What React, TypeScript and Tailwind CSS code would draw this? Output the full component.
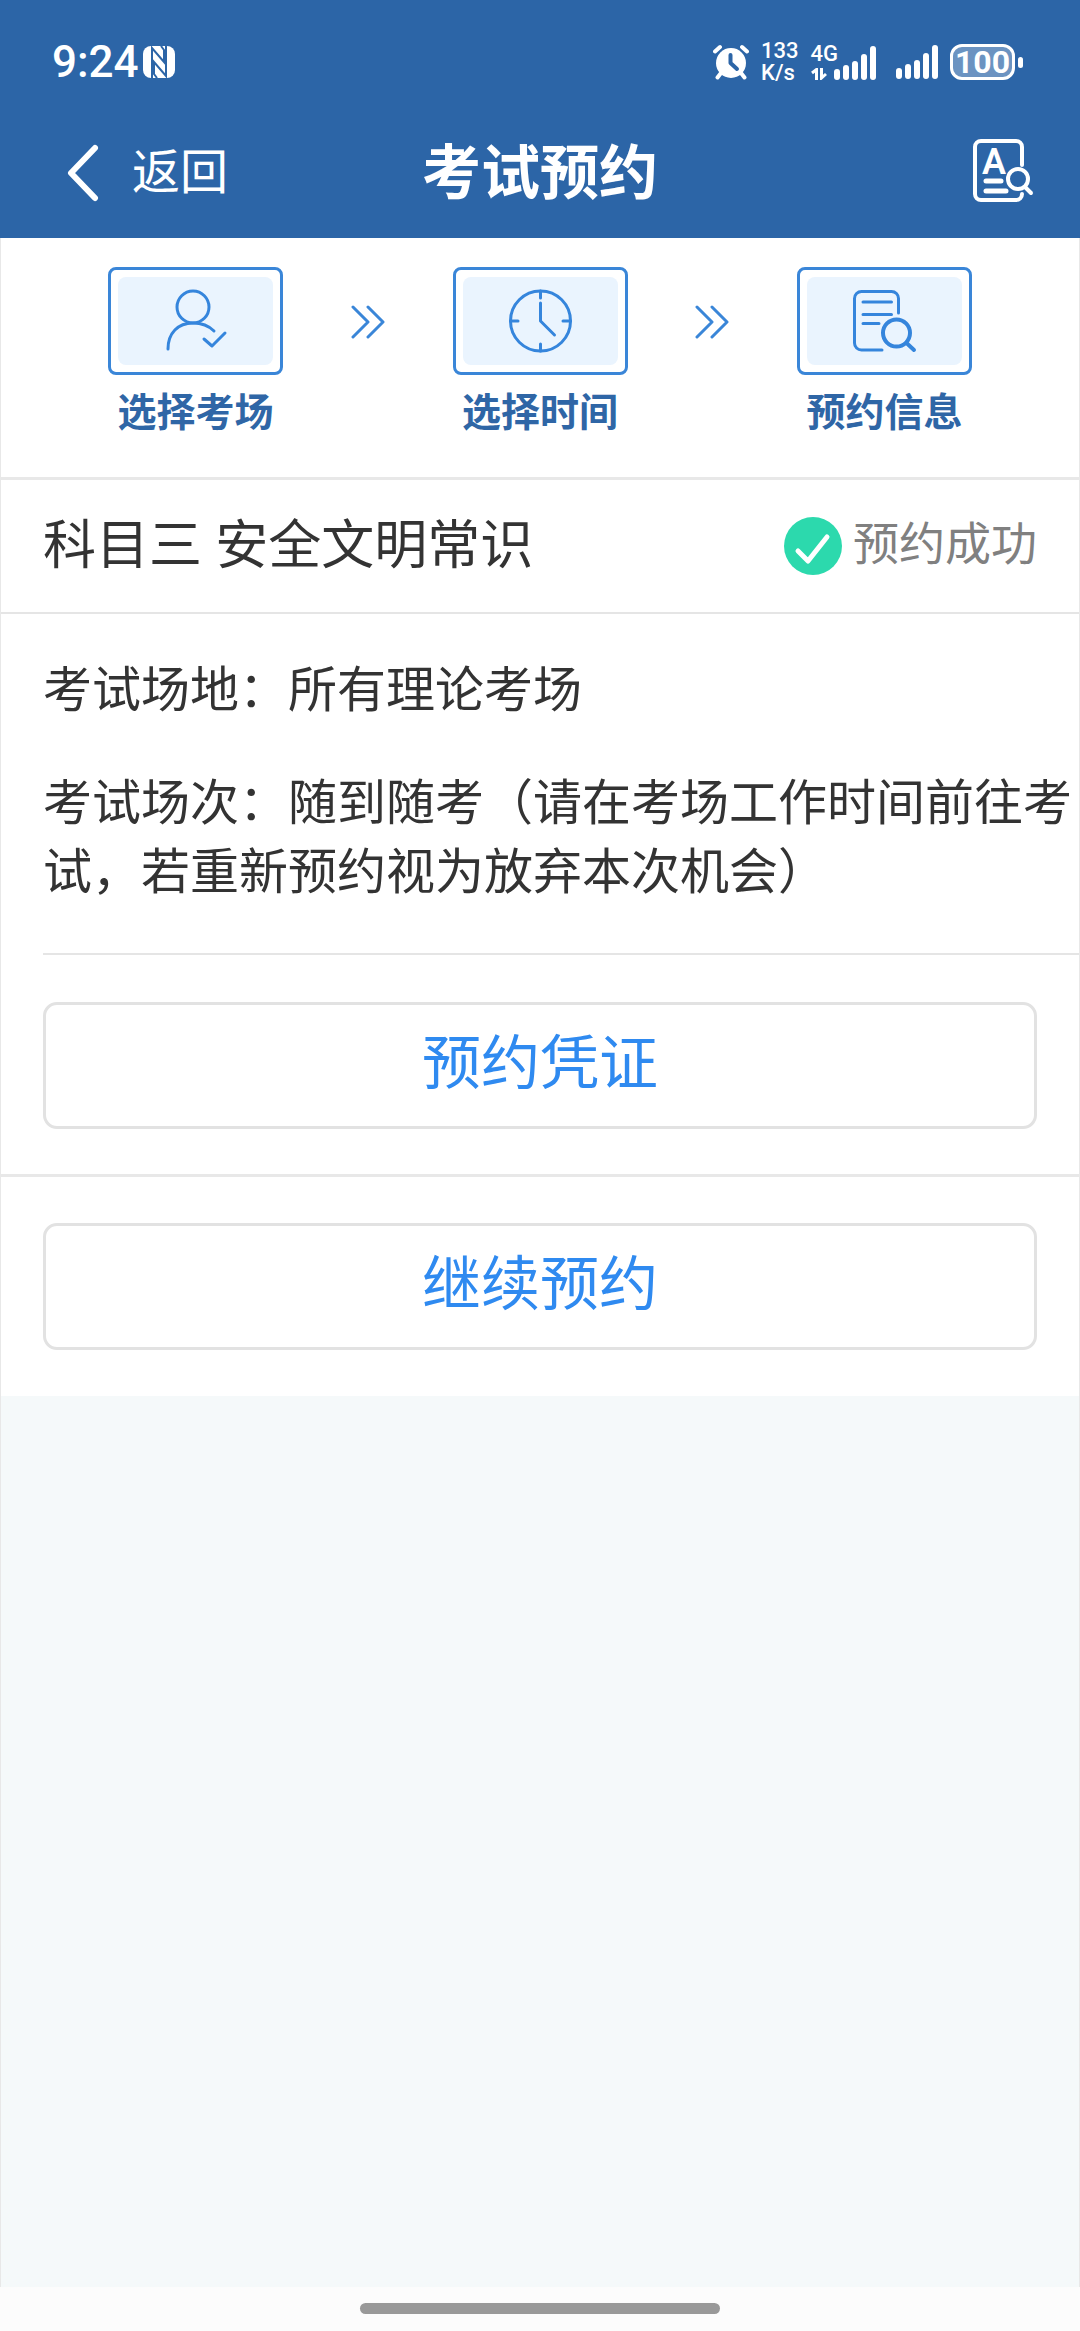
import type { ReactNode } from 'react';

interface StepProps {
  label: string;
  children: ReactNode;
}

function SignalBars() {
  return (
    <svg width="42" height="34" viewBox="0 0 42 34" fill="currentColor">
      <rect x="0" y="23" width="6" height="11" rx="3" />
      <rect x="9" y="19" width="6" height="15" rx="3" />
      <rect x="18" y="15" width="6" height="19" rx="3" />
      <rect x="27" y="8" width="6" height="26" rx="3" />
      <rect x="36" y="0" width="6" height="34" rx="3" />
    </svg>
  );
}

function StatusBar() {
  return (
    <div className="flex h-[108px] items-center justify-between pt-4 pr-[57px] pl-[52px]">
      <div className="flex items-center gap-1">
        <span className="text-[44px] leading-none font-medium">9:24</span>
        {/* NFC */}
        <svg width="32" height="32" viewBox="0 0 32 32">
          <rect width="32" height="32" rx="8" fill="currentColor" />
          <path d="M9 32V2L21 16V4L18 0M23 0V30L11 16V28L14 32" fill="none" stroke="#2c65a7" strokeWidth="2" />
        </svg>
      </div>

      <div className="flex items-center">
        {/* Alarm */}
        <svg width="36" height="36" viewBox="0 0 36 36">
          <circle cx="18" cy="19" r="15" fill="currentColor" />
          <path d="M2 7.500L7 3M34 7.500L29 3M8 29L4.500 33.500M28 29L31.500 33.500" stroke="currentColor" strokeWidth="4" strokeLinecap="round" />
          <path d="M17.500 11V19L24 25" fill="none" stroke="#2c65a7" strokeWidth="4" strokeLinecap="round" strokeLinejoin="round" />
        </svg>
        <div className="ml-3 flex flex-col text-[22px] leading-[22px] font-medium">
          <span>133</span>
          <span>K/s</span>
        </div>
        <div className="ml-3 flex items-end">
          <div className="-mr-1 flex flex-col gap-1">
            <span className="text-[22px] leading-5 font-medium">4G</span>
            <svg width="16" height="12" viewBox="0 0 16 12" fill="none" stroke="currentColor" strokeWidth="3">
              <path d="M1 5L5.500 1.500V12M10.500 0V10L15 6" />
            </svg>
          </div>
          <SignalBars />
        </div>
        <div className="ml-5">
          <SignalBars />
        </div>
        <div className="ml-3 flex h-9 w-[65px] items-center justify-center rounded-xl border-3 border-white bg-white/30 text-[32px] leading-none font-bold">
          100
        </div>
        <span className="ml-[3px] h-[11px] w-[5px] rounded-full bg-white" />
      </div>
    </div>
  );
}

function NavBar() {
  return (
    <nav className="grid h-[130px] grid-cols-3 items-center px-[46px]">
      <button type="button" className="flex items-center gap-8 justify-self-start pl-5 text-5xl leading-none">
        <svg width="34" height="58" viewBox="0 0 34 58" fill="none" stroke="currentColor" strokeWidth="6" strokeLinecap="round" strokeLinejoin="round">
          <path d="M29 4L5 29L29 54" />
        </svg>
        返回
      </button>
      <h1 className="text-center text-[59px] leading-none font-bold whitespace-nowrap">考试预约</h1>
      <button type="button" aria-label="考试说明" className="justify-self-end pb-1">
        <svg width="62" height="64" viewBox="0 0 62 64" fill="none" stroke="currentColor" strokeWidth="4" strokeLinecap="round" strokeLinejoin="round">
          <path d="M50 26V8a6 6 0 0 0-6-6H9a6 6 0 0 0-6 6V55a6 6 0 0 0 6 6H44a6 6 0 0 0 6-6" />
          <text x="22" y="35" textAnchor="middle" fontSize="36" fontWeight="600" fill="currentColor" stroke="none">A</text>
          <path d="M14 42H29M14 52H34" strokeWidth="5" />
          <circle cx="46" cy="40" r="10" />
          <path d="M53 48L59 54" />
        </svg>
      </button>
    </nav>
  );
}

function Step({ label, children }: StepProps) {
  return (
    <div className="flex flex-col items-center gap-1">
      <div className="rounded-lg border-3 border-[#3a86d8] p-[7px]">
        <svg width="155" height="88" viewBox="0 0 155 88" className="rounded-lg bg-[#eaf4fe]" fill="none" stroke="#3585dc" strokeWidth="3" strokeLinecap="round" strokeLinejoin="round">
          {children}
        </svg>
      </div>
      <span className="text-[39px] leading-[68px] font-bold text-[#2f66a6]">{label}</span>
    </div>
  );
}

function StepArrow() {
  return (
    <svg width="34" height="34" viewBox="0 0 34 34" className="mt-[38px]" fill="none" stroke="#3a86d8" strokeWidth="3" strokeLinecap="round" strokeLinejoin="round">
      <path d="M2 2L17 17L2 32M17 2L32 17L17 32" />
    </svg>
  );
}

function ActionButton({ label }: { label: string }) {
  return (
    <button type="button" className="h-[127px] w-full rounded-[14px] border-3 border-[#e2e2e2] bg-white pb-1 text-[59px] leading-none text-[#2f8af0]">
      {label}
    </button>
  );
}

export default function App() {
  const details = [
    '考试场地：所有理论考场',
    '考试场次：随到随考（请在考场工作时间前往考试，若重新预约视为放弃本次机会）'
  ];

  return (
    <div className="flex min-h-screen flex-col bg-[#f5f9fa] font-[Roboto,'Noto_Sans_CJK_SC',sans-serif] text-[#333333]">
      <header className="bg-[#2c65a7] text-white">
        <StatusBar />
        <NavBar />
      </header>

      <main className="flex-1 border-x border-[#e8e8e8]">
        {/* Booking steps */}
        <section className="flex h-[242px] items-start justify-between border-b-3 border-[#e8e8e8] bg-white px-[107px] pt-[29px]">
          <Step label="选择考场">
            <circle cx="75" cy="30" r="16" />
            <path d="M50 72C50 56 60 46 75 46C83 46 91 49 96 54" />
            <path d="M86 62L94 69L107 56" />
          </Step>
          <StepArrow />
          <Step label="选择时间">
            <circle cx="77.500" cy="44" r="30" />
            <path d="M77.500 14V21M77.500 67V74M47.500 44H55M100 44H107.500" />
            <path d="M77.500 26V44L91.500 58" />
          </Step>
          <StepArrow />
          <Step label="预约信息">
            <path d="M91.500 36V21.500a7 7 0 0 0-7-7H54.500a7 7 0 0 0-7 7V66a7 7 0 0 0 7 7H75" />
            <path d="M56 25H84.500M56 37.500H84.500M56 46.500H72" />
            <circle cx="89.500" cy="56" r="13.500" strokeWidth="4" />
            <path d="M99.500 66L107 73" strokeWidth="4" />
          </Step>
        </section>

        {/* Subject and status */}
        <section className="flex h-[134px] items-center justify-between border-b-2 border-[#e5e5e5] bg-white px-[42px]">
          <h2 className="text-[53px] leading-none">科目三 安全文明常识</h2>
          <div className="flex items-center gap-[11px]">
            <svg width="58" height="58" viewBox="0 0 58 58" fill="none">
              <circle cx="29" cy="29" r="29" fill="#2cd9ad" />
              <path d="M14 34L24 44L43 20" stroke="#ffffff" strokeWidth="5" strokeLinecap="round" strokeLinejoin="round" />
            </svg>
            <span className="pb-1 text-[46px] leading-none text-[#808080]">预约成功</span>
          </div>
        </section>

        {/* Details */}
        <section className="bg-white pl-[42px]">
          <div className="flex flex-col gap-11 border-b-2 border-[#e5e5e5] pt-[42px] pb-[46px] text-[49px] leading-[69px]">
            {details.map((text) => (
              <p key={text}>{text}</p>
            ))}
          </div>
        </section>

        <section className="border-b-3 border-[#e8e8e8] bg-white px-[42px] pt-[47px] pb-[45px]">
          <ActionButton label="预约凭证" />
        </section>
        <section className="bg-white px-[42px] py-[46px]">
          <ActionButton label="继续预约" />
        </section>
      </main>

      {/* Gesture bar */}
      <footer className="flex h-11 items-start justify-center bg-[#fcfcfc] pt-4">
        <span className="h-[11px] w-1/3 rounded-full bg-[#999999]" />
      </footer>
    </div>
  );
}
